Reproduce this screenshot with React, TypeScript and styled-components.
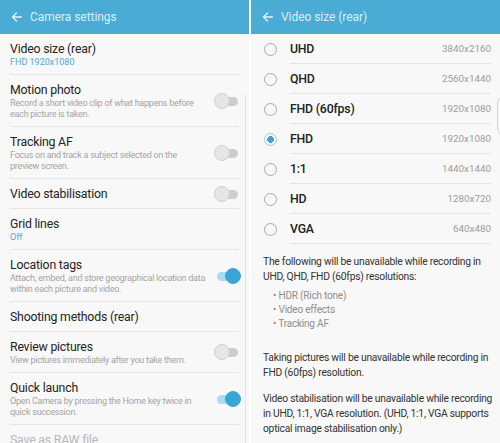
import styled, { createGlobalStyle } from "styled-components";

const GlobalStyle = createGlobalStyle`
  html, body {
    margin: 0;
    padding: 0;
    background: #ffffff;
    font-family: Roboto, "Noto Sans", "Liberation Sans", sans-serif;
    overflow: hidden;
  }
`;

type SettingItem = {
  title: string;
  sub?: string;
  desc?: string;
  toggle?: "on" | "off";
  disabled?: boolean;
};

const settings: SettingItem[] = [
  { title: "Video size (rear)", sub: "FHD 1920x1080" },
  {
    title: "Motion photo",
    desc: "Record a short video clip of what happens before each picture is taken.",
    toggle: "off",
  },
  {
    title: "Tracking AF",
    desc: "Focus on and track a subject selected on the preview screen.",
    toggle: "off",
  },
  { title: "Video stabilisation", toggle: "off" },
  { title: "Grid lines", sub: "Off" },
  {
    title: "Location tags",
    desc: "Attach, embed, and store geographical location data within each picture and video.",
    toggle: "on",
  },
  { title: "Shooting methods (rear)" },
  {
    title: "Review pictures",
    desc: "View pictures immediately after you take them.",
    toggle: "off",
  },
  {
    title: "Quick launch",
    desc: "Open Camera by pressing the Home key twice in quick succession.",
    toggle: "on",
  },
  { title: "Save as RAW file", disabled: true },
];

const sizes = [
  { label: "UHD", value: "3840x2160" },
  { label: "QHD", value: "2560x1440" },
  { label: "FHD (60fps)", value: "1920x1080" },
  { label: "FHD", value: "1920x1080", selected: true },
  { label: "1:1", value: "1440x1440" },
  { label: "HD", value: "1280x720" },
  { label: "VGA", value: "640x480" },
];

function BackArrow() {
  return (
    <svg width="12" height="12" viewBox="0 0 24 24" fill="none">
      <path
        d="M21 12H4M11 4l-8 8 8 8"
        stroke="#e4f3fa"
        strokeWidth="2.6"
        strokeLinecap="round"
        strokeLinejoin="round"
      />
    </svg>
  );
}

export default function App() {
  return (
    <>
      <GlobalStyle />
      <Screens>
        <Panel>
          <Header>
            <BackArrow />
            <HeaderTitle>Camera settings</HeaderTitle>
          </Header>
          <List>
            {settings.map((s) => (
              <SettingRow key={s.title}>
                <SettingText>
                  <SettingTitle $disabled={s.disabled}>{s.title}</SettingTitle>
                  {s.sub && <SettingSub>{s.sub}</SettingSub>}
                  {s.desc && <SettingDesc>{s.desc}</SettingDesc>}
                </SettingText>
                {s.toggle && (
                  <Switch $on={s.toggle === "on"}>
                    <Knob $on={s.toggle === "on"} />
                  </Switch>
                )}
              </SettingRow>
            ))}
          </List>
          <ScrollIndicator />
        </Panel>

        <Panel>
          <Header>
            <BackArrow />
            <HeaderTitle>Video size (rear)</HeaderTitle>
          </Header>
          <List>
            {sizes.map((o) => (
              <OptionRow key={o.label}>
                <Radio $checked={o.selected} />
                <OptionBody>
                  <OptionLabel>{o.label}</OptionLabel>
                  <OptionValue>{o.value}</OptionValue>
                </OptionBody>
              </OptionRow>
            ))}
          </List>
          <Notes>
            <Note>
              The following will be unavailable while recording in UHD, QHD,
              FHD (60fps) resolutions:
            </Note>
            <Bullets>
              <li>HDR (Rich tone)</li>
              <li>Video effects</li>
              <li>Tracking AF</li>
            </Bullets>
            <Note>
              Taking pictures will be unavailable while recording in FHD
              (60fps) resolution.
            </Note>
            <Note>
              Video stabilisation will be unavailable while recording in UHD,
              1:1, VGA resolution. (UHD, 1:1, VGA supports optical image
              stabilisation only.)
            </Note>
          </Notes>
          <EdgeCurve />
        </Panel>
      </Screens>
    </>
  );
}

const Screens = styled.div`
  display: grid;
  grid-template-columns: 249px 249px;
  column-gap: 2px;
  width: 500px;
  height: 443px;
  overflow: hidden;
`;

const Panel = styled.div`
  position: relative;
  background: #f8f8f8;
  overflow: hidden;
`;

const Header = styled.div`
  height: 34px;
  background: #4aabd5;
  display: flex;
  align-items: center;
  gap: 7px;
  padding: 0 0 0 11px;
  box-sizing: border-box;
`;

const HeaderTitle = styled.span`
  color: #d9eff9;
  font-size: 12px;
  letter-spacing: -0.05px;
`;

const List = styled.div`
  display: flex;
  flex-direction: column;
`;

const SettingRow = styled.div`
  display: flex;
  align-items: center;
  gap: 8px;
  margin: 0 10px;
  padding: 7px 0 6px;
  border-bottom: 1px solid #e6e6e6;
`;

const SettingText = styled.div`
  flex: 1;
  min-width: 0;
`;

const SettingTitle = styled.div<{ $disabled?: boolean }>`
  font-size: 12.3px;
  letter-spacing: -0.2px;
  line-height: 16px;
  color: ${(p) => (p.$disabled ? "#b9b9b9" : "#242424")};
`;

const SettingSub = styled.div`
  font-size: 9px;
  line-height: 11px;
  color: #4aabd5;
`;

const SettingDesc = styled.div`
  max-width: 197px;
  font-size: 9px;
  letter-spacing: -0.25px;
  line-height: 11px;
  color: #a4a4a4;
`;

const Switch = styled.div<{ $on?: boolean }>`
  position: relative;
  flex: none;
  width: 21px;
  height: 9px;
  margin-right: 1px;
  border-radius: 5px;
  background: ${(p) => (p.$on ? "#a9dcef" : "#cdcdcd")};
`;

const Knob = styled.div<{ $on?: boolean }>`
  position: absolute;
  top: -4px;
  left: ${(p) => (p.$on ? "8px" : "-3px")};
  width: 16px;
  height: 16px;
  border-radius: 50%;
  box-sizing: border-box;
  background: ${(p) => (p.$on ? "#3aa6d8" : "#e6e6e6")};
  border: 1px solid ${(p) => (p.$on ? "#3aa6d8" : "#cfcfcf")};
`;

const ScrollIndicator = styled.div`
  position: absolute;
  right: 3px;
  top: 94px;
  width: 1px;
  height: 360px;
  background: #e2e2e2;
`;

const OptionRow = styled.div`
  display: flex;
  align-items: center;
  height: 30px;
  padding-left: 13px;
`;

const Radio = styled.div<{ $checked?: boolean }>`
  flex: none;
  width: 13px;
  height: 13px;
  border-radius: 50%;
  box-sizing: border-box;
  border: 1.3px solid ${(p) => (p.$checked ? "#8fd0ec" : "#a8a8a8")};
  background: ${(p) =>
    p.$checked
      ? "radial-gradient(circle, #3aa6d8 0 3.2px, transparent 3.6px)"
      : "transparent"};
  margin-right: 13px;
`;

const OptionBody = styled.div`
  flex: 1;
  align-self: stretch;
  display: flex;
  align-items: center;
  justify-content: space-between;
  margin-right: 9px;
  border-bottom: 1px solid #e4e4e4;
`;

const OptionLabel = styled.span`
  font-size: 12.3px;
  font-weight: 500;
  letter-spacing: -0.2px;
  color: #222;
`;

const OptionValue = styled.span`
  font-size: 9.8px;
  color: #9c9c9c;
`;

const Notes = styled.div`
  padding: 10px 6px 0 12px;
  display: flex;
  flex-direction: column;
  gap: 11px;
`;

const Note = styled.p`
  margin: 0;
  font-size: 10.3px;
  letter-spacing: -0.25px;
  line-height: 15px;
  color: #333;
`;

const Bullets = styled.ul`
  margin: -6px 0 8px;
  padding: 0 0 0 10px;
  list-style: none;
  font-size: 10px;
  letter-spacing: -0.2px;
  line-height: 14px;
  color: #8e8e8e;

  li::before {
    content: "• ";
  }
`;

const EdgeCurve = styled.div`
  position: absolute;
  right: -6px;
  top: 96px;
  width: 8px;
  height: 40px;
  border-left: 1px solid #d6d6d6;
  border-radius: 8px 0 0 8px;
`;
